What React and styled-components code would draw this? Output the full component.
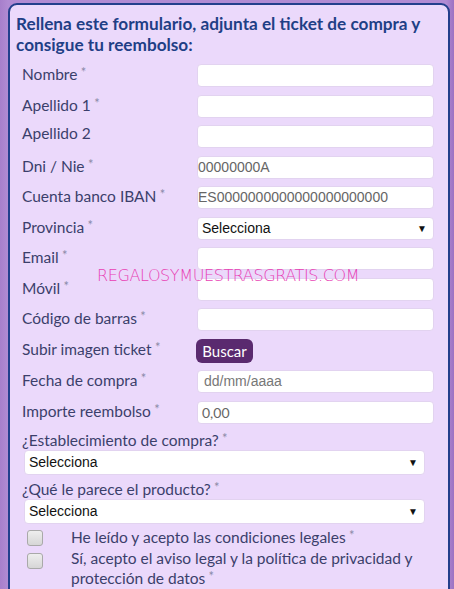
import React from "react";
import styled, { createGlobalStyle } from "styled-components";

const Global = createGlobalStyle`
  html, body { margin: 0; padding: 0; }
  body {
    width: 454px;
    height: 589px;
    overflow: hidden;
    background: linear-gradient(90deg, #a77fcb 0px, #b18bd3 8px, #b18bd3 446px, #9d72c2 454px);
    font-family: Lato, "Open Sans", sans-serif;
  }
`;

const Panel = styled.div`
  position: relative;
  margin: 3px 4px 0 8px;
  height: 620px;
  box-sizing: border-box;
  border: 2px solid #233f8c;
  border-radius: 9px;
  background: #ebd9fb;
  padding: 8px 14px 0 12px;
`;

const Title = styled.h2`
  margin: 0 -10px 0 -6px;
  font-size: 17.2px;
  line-height: 21px;
  font-weight: 700;
  color: #1f3f86;
`;

const Rows = styled.div`
  margin-top: 9px;
  display: flex;
  flex-direction: column;
  gap: 7.5px;
`;

const Row = styled.div`
  display: grid;
  grid-template-columns: 175px 1fr;
  align-items: start;
`;

const Label = styled.label`
  font-size: 15.5px;
  line-height: 17px;
  color: #3b3f6b;
  white-space: nowrap;
`;

const Star = styled.span`
  color: #8a8aa8;
  font-size: 13px;
  vertical-align: 3px;
`;

const Input = styled.div`
  height: 23px;
  box-sizing: border-box;
  background: #fff;
  border: 1px solid #e2d3f0;
  border-radius: 4px;
  font-size: 14px;
  line-height: 21px;
  color: ${(p) => p.$color || "#666"};
  padding-left: ${(p) => p.$pad ?? 0}px;
  display: flex;
  align-items: center;
  justify-content: space-between;
  padding-right: 6px;
  font-family: ${(p) => (p.$lato ? "Lato, sans-serif" : `"Liberation Sans", Arial, sans-serif`)};
`;

const Caret = styled.span`
  font-size: 10px;
  color: #111;
`;

const Button = styled.button`
  height: 24px;
  width: 57px;
  margin-left: -1px;
  border: none;
  border-radius: 6px;
  background: #5a2a6f;
  color: #fff;
  font-family: Lato, sans-serif;
  font-size: 15px;
  padding: 0;
`;

const Block = styled.div`
  margin-top: ${(p) => p.$mt ?? 0}px;
`;

const BlockLabel = styled.div`
  font-size: 15.5px;
  line-height: 18px;
  color: #3b3f6b;
  margin-bottom: 1px;
`;

const WideSelect = styled(Input)`
  margin-left: 2px;
  width: 401px;
  height: 25px;
  padding-left: 4px;
  color: #111;
`;

const Checks = styled.div`
  margin-top: 2px;
  display: flex;
  flex-direction: column;
  gap: 3px;
`;

const CheckRow = styled.div`
  display: grid;
  grid-template-columns: 49px 1fr;
  align-items: start;
`;

const Box = styled.span`
  display: block;
  margin-left: 5px;
  margin-top: 4px;
  width: 16px;
  height: 16px;
  box-sizing: border-box;
  border: 1px solid #a9a9a9;
  border-radius: 3px;
  background: linear-gradient(#eeeeee, #d6d6d6);
`;

const CheckText = styled.span`
  font-size: 15.5px;
  line-height: 18px;
  color: #3b3f6b;
`;

const Watermark = styled.div`
  position: absolute;
  left: 87px;
  top: 261px;
  font-family: "DejaVu Sans", sans-serif;
  font-weight: 200;
  font-size: 16px;
  letter-spacing: -0.4px;
  color: #e83fb4;
  pointer-events: none;
`;

const L = ({ children, req = true }) => (
  <Label>
    {children}
    {req && <Star> *</Star>}
  </Label>
);

const fields = [
  { label: "Nombre" },
  { label: "Apellido 1" },
  { label: "Apellido 2", req: false },
  { label: "Dni / Nie", value: "00000000A" },
  { label: "Cuenta banco IBAN", value: "ES0000000000000000000000" },
  { label: "Provincia", select: true },
  { label: "Email" },
  { label: "Móvil" },
  { label: "Código de barras" },
  { label: "Subir imagen ticket", button: true },
  { label: "Fecha de compra", value: "dd/mm/aaaa", pad: 6, color: "#777" },
  { label: "Importe reembolso", value: "0,00", pad: 4, color: "#666", lato: true },
];

export default function App() {
  return (
    <>
      <Global />
      <Panel>
        <Title>
          Rellena este formulario, adjunta el ticket de compra y consigue tu reembolso:
        </Title>
        <Rows>
          {fields.map((f) => (
            <Row key={f.label}>
              <L req={f.req !== false}>{f.label}</L>
              {f.button ? (
                <div>
                  <Button>Buscar</Button>
                </div>
              ) : f.select ? (
                <Input $color="#111" $pad={4}>
                  Selecciona
                  <Caret>▼</Caret>
                </Input>
              ) : (
                <Input $pad={f.pad ?? 0} $color={f.color} $lato={f.lato}>
                  {f.value || ""}
                </Input>
              )}
            </Row>
          ))}
        </Rows>
        <Block $mt={5}>
          <BlockLabel>
            ¿Establecimiento de compra?<Star> *</Star>
          </BlockLabel>
          <WideSelect>
            Selecciona
            <Caret>▼</Caret>
          </WideSelect>
        </Block>
        <Block $mt={3}>
          <BlockLabel>
            ¿Qué le parece el producto?<Star> *</Star>
          </BlockLabel>
          <WideSelect>
            Selecciona
            <Caret>▼</Caret>
          </WideSelect>
        </Block>
        <Checks>
          <CheckRow>
            <Box />
            <CheckText>
              He leído y acepto las condiciones legales<Star> *</Star>
            </CheckText>
          </CheckRow>
          <CheckRow>
            <Box />
            <CheckText>
              Sí, acepto el aviso legal y la política de privacidad y
              <br />
              protección de datos<Star> *</Star>
            </CheckText>
          </CheckRow>
        </Checks>
        <Watermark>REGALOSYMUESTRASGRATIS.COM</Watermark>
      </Panel>
    </>
  );
}
